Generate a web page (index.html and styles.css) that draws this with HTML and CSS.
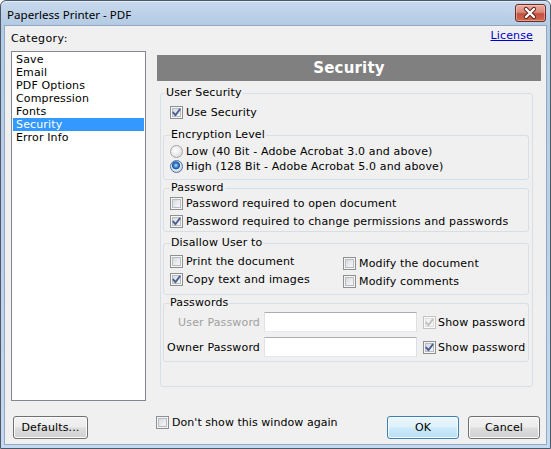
FILE: index.html
```html
<!DOCTYPE html>
<html>
<head>
<meta charset="utf-8">
<title>Paperless Printer - PDF</title>
<link rel="stylesheet" href="styles.css">
</head>
<body>
<div class="window">
  <div class="titlebar">
    <span class="title">Paperless Printer - PDF</span>
    <span class="close">
      <svg width="30" height="18" viewBox="0 0 30 18">
        <path d="M11 5 L19 13 M19 5 L11 13" stroke="#5b1f16" stroke-width="4.2" stroke-linecap="round" fill="none"/>
        <path d="M11 5 L19 13 M19 5 L11 13" stroke="#ffffff" stroke-width="2.4" stroke-linecap="round" fill="none"/>
      </svg>
    </span>
  </div>
  <div class="client">
    <div class="main">
      <div class="left">
        <div class="cat-label">Category:</div>
        <ul class="listbox">
          <li>Save</li>
          <li>Email</li>
          <li>PDF Options</li>
          <li>Compression</li>
          <li>Fonts</li>
          <li class="sel">Security</li>
          <li>Error Info</li>
        </ul>
      </div>
      <div class="right">
        <div class="license-row"><a class="license" href="#">License</a></div>
        <div class="panel">
          <div class="panel-header">Security</div>
          <fieldset class="group outer">
            <legend>User Security</legend>
            <div class="row check-row use-row"><span class="cb"><svg viewBox="0 0 11 11"><path d="M2.3 5.6 L4.4 8.2 L8.8 2.4" /></svg></span><span>Use Security</span></div>

            <fieldset class="group inner enc">
              <legend>Encryption Level</legend>
              <div class="row radio-row"><span class="rb"></span><span>Low (40 Bit - Adobe Acrobat 3.0 and above)</span></div>
              <div class="row radio-row"><span class="rb on"></span><span>High (128 Bit - Adobe Acrobat 5.0 and above)</span></div>
            </fieldset>

            <fieldset class="group inner pw">
              <legend>Password</legend>
              <div class="row check-row"><span class="cb"></span><span>Password required to open document</span></div>
              <div class="row check-row"><span class="cb"><svg viewBox="0 0 11 11"><path d="M2.3 5.6 L4.4 8.2 L8.8 2.4" /></svg></span><span>Password required to change permissions and passwords</span></div>
            </fieldset>

            <fieldset class="group inner dis">
              <legend>Disallow User to</legend>
              <div class="cols">
                <div class="col col-a">
                  <div class="row check-row"><span class="cb"></span><span>Print the document</span></div>
                  <div class="row check-row"><span class="cb"><svg viewBox="0 0 11 11"><path d="M2.3 5.6 L4.4 8.2 L8.8 2.4" /></svg></span><span>Copy text and images</span></div>
                </div>
                <div class="col col-b">
                  <div class="row check-row"><span class="cb"></span><span>Modify the document</span></div>
                  <div class="row check-row"><span class="cb"></span><span>Modify comments</span></div>
                </div>
              </div>
            </fieldset>

            <fieldset class="group inner pws">
              <legend>Passwords</legend>
              <div class="pw-row">
                <span class="pw-label disabled">User Password</span>
                <span class="textbox"></span>
                <span class="cb disabled"><svg viewBox="0 0 11 11"><path d="M2.3 5.6 L4.4 8.2 L8.8 2.4" /></svg></span>
                <span class="show">Show password</span>
              </div>
              <div class="pw-row">
                <span class="pw-label">Owner Password</span>
                <span class="textbox"></span>
                <span class="cb"><svg viewBox="0 0 11 11"><path d="M2.3 5.6 L4.4 8.2 L8.8 2.4" /></svg></span>
                <span class="show">Show password</span>
              </div>
            </fieldset>
          </fieldset>
        </div>
      </div>
    </div>
    <div class="bottom">
      <button class="btn defaults">Defaults...</button>
      <div class="row check-row dont"><span class="cb"></span><span>Don't show this window again</span></div>
      <button class="btn ok">OK</button>
      <button class="btn cancel">Cancel</button>
    </div>
  </div>
</div>
</body>
</html>
```

FILE: styles.css
```css
* { box-sizing: border-box; }
html, body { margin: 0; padding: 0; }
body {
  width: 551px;
  height: 449px;
  overflow: hidden;
  background: #ffffff;
  font-family: "DejaVu Sans", Verdana, sans-serif;
  font-size: 11px;
  letter-spacing: 0.15px;
  color: #000;
}

.window {
  width: 551px;
  height: 449px;
  border: 1px solid #4d5968;
  border-radius: 6px 6px 0 0;
  background: linear-gradient(#c7d9ed 0px, #b4cbe4 24px, #bcd2ea 60%, #c4daf0 100%);
  padding: 0 3px 3px 3px;
  display: flex;
  flex-direction: column;
  box-shadow: inset 0 1px 0 #e4eef8;
}

.titlebar {
  height: 24px;
  display: flex;
  align-items: flex-start;
  justify-content: space-between;
}
.title {
  font-family: "Noto Sans", "DejaVu Sans", sans-serif;
  font-size: 11.6px;
  letter-spacing: 0;
  line-height: 16px;
  padding: 6px 0 0 3px;
  color: #000;
}
.close {
  width: 31px;
  height: 18px;
  margin: 3px 1px 0 0;
  border: 1px solid #6e2a20;
  border-radius: 3px;
  background: linear-gradient(#e9aa9c 0%, #d98a7b 45%, #c44f3c 55%, #cf6a52 100%);
  box-shadow: inset 0 0 0 1px rgba(255,255,255,0.35);
  display: flex;
  align-items: center;
  justify-content: center;
}
.close svg { display: block; margin-left: -1px; }

.client {
  flex: 1;
  background: #f0f0f0;
  border: 1px solid #93a9c3;
  padding: 4px 5px 5px 6px;
  display: flex;
  flex-direction: column;
}

.main {
  height: 371px;
  display: flex;
  gap: 11px;
}
.left {
  width: 135px;
  display: flex;
  flex-direction: column;
}
.cat-label {
  line-height: 18px;
  height: 21px;
  letter-spacing: 0.4px;
}
.listbox {
  list-style: none;
  margin: 0;
  padding: 1px;
  height: 350px;
  background: #fff;
  border: 1px solid #828790;
}
.listbox li {
  height: 13px;
  line-height: 13px;
  padding-left: 3px;
  white-space: nowrap;
}
.listbox li.sel {
  background: #3399ff;
  color: #fff;
}

.right {
  flex: 1;
  display: flex;
  flex-direction: column;
}
.license-row {
  height: 25px;
  display: flex;
  justify-content: flex-end;
  padding-right: 8px;
}
.license {
  color: #0000cc;
  text-decoration: underline;
  line-height: 13px;
  margin-top: -1px;
}

.panel {
  display: flex;
  flex-direction: column;
}
.panel-header {
  height: 26px;
  line-height: 26px;
  background: #808080;
  color: #fff;
  font-weight: bold;
  font-size: 15px;
  letter-spacing: 0.2px;
  text-align: center;
}

.group {
  margin: 0;
  min-width: 0;
  border: 1px solid #d5dfe5;
  border-radius: 3px;
}
.group > legend {
  line-height: 12px;
  padding: 0 1px;
  margin: 0;
}
.outer {
  margin: 6px 8px 0 3px;
  padding: 0 3px 24px 2px;
}
.outer > legend { margin-left: 2px; }

.inner { padding: 0 6px 0 6px; }
.enc { margin-top: 8px; padding-top: 3px; padding-bottom: 5px; }
.pw { margin-top: 2px; padding-top: 0; padding-bottom: 1px; }
.dis { margin-top: 5px; padding-top: 3px; padding-bottom: 4px; }
.pws { margin-top: 2px; padding: 3px 0 4px 2px; }
.pws > legend { margin-left: 3px; }

.row {
  display: flex;
  align-items: center;
  white-space: nowrap;
}
.check-row { height: 18px; gap: 3px; }
.radio-row { height: 15px; gap: 3px; }
.use-row { margin-top: 4px; padding-left: 7px; }

.cols { display: flex; }
.col-a { width: 173px; }
.col-b { margin-top: 2px; }

.cb {
  flex: none;
  width: 13px;
  height: 13px;
  border: 1px solid #8e8f8f;
  background: linear-gradient(135deg, #cdd1d7 0%, #eceef0 60%, #fafafa 100%);
  box-shadow: inset 0 0 0 1px #f6f6f6, inset 0 0 0 2px #b8bcc2;
  display: inline-block;
}
.cb svg { display: block; width: 11px; height: 11px; }
.cb svg path {
  fill: none;
  stroke: #4b5f92;
  stroke-width: 1.9;
  stroke-linecap: round;
  stroke-linejoin: round;
}
.cb.disabled {
  border-color: #c2c4c6;
  background: #f4f4f4;
  box-shadow: inset 0 0 0 1px #fbfbfb, inset 0 0 0 2px #dedfe0;
}
.cb.disabled svg path { stroke: #c2c2c2; }

.rb {
  flex: none;
  width: 13px;
  height: 13px;
  border-radius: 50%;
  border: 1px solid #a3a3a3;
  background: radial-gradient(circle at 40% 40%, #ffffff 0%, #ececec 45%, #d2d2d2 100%);
  display: inline-block;
}
.rb.on {
  border-color: #3d6fae;
  background:
    radial-gradient(circle at 45% 40%, #b8e4ff 0px, #3f8fd8 2px, #1d5aa8 3.2px, #2e62a4 3.8px, rgba(255,255,255,0) 4.3px),
    radial-gradient(circle at 40% 40%, #ffffff 0%, #e8e8e8 45%, #c9c9c9 100%);
}

.pw-row {
  display: flex;
  align-items: center;
  height: 20px;
  white-space: nowrap;
}
.pw-row + .pw-row { margin-top: 5px; }
.pw-label {
  width: 94px;
  text-align: right;
  margin-right: 4px;
}
.pw-label.disabled { color: #a0a0a0; }
.textbox {
  width: 153px;
  height: 20px;
  background: #fff;
  border: 1px solid;
  border-color: #abadb3 #dbdfe6 #e3e9ef #e2e3ea;
  margin-right: 6px;
}
.show { margin-left: 2px; }

.bottom {
  margin-top: 15px;
  height: 23px;
  display: flex;
  align-items: center;
}
.btn {
  height: 23px;
  padding: 0;
  font-family: "DejaVu Sans", Verdana, sans-serif;
  font-size: 11px;
  letter-spacing: 0.15px;
  color: #000;
  border: 1px solid #707070;
  border-radius: 3px;
  background: linear-gradient(#f3f3f3 0%, #ececec 48%, #dddddd 52%, #d0d0d0 100%);
  box-shadow: inset 0 0 0 1px #fbfbfb;
}
.defaults { width: 75px; margin-left: 2px; }
.dont {
  align-self: flex-start;
  margin-top: -3px;
  margin-left: 68px;
  letter-spacing: 0.05px;
}
.ok {
  width: 72px;
  margin-left: auto;
  border-color: #3c7fb1;
  background: linear-gradient(#eaf6fd 0%, #dff2fc 48%, #cdeafb 52%, #b9e0f7 100%);
  box-shadow: inset 0 0 0 1px #f5fbff;
}
.cancel { width: 72px; margin-left: 9px; margin-right: 1px; }
```
